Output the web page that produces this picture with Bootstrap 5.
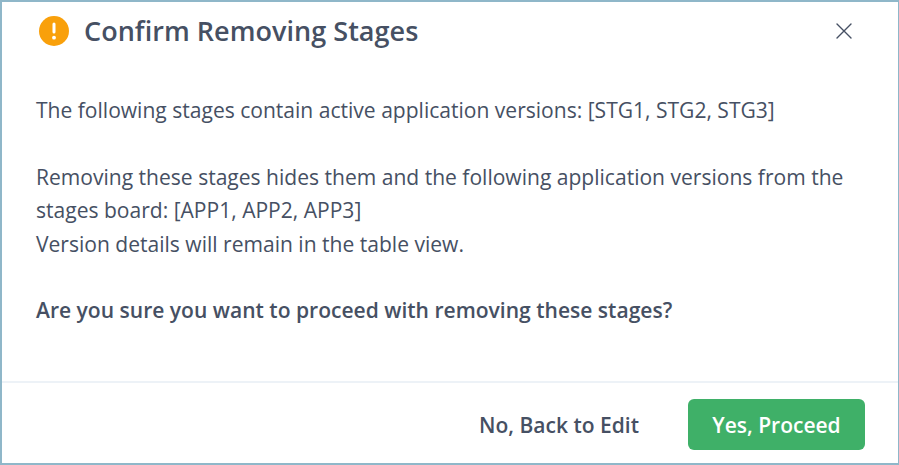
<!DOCTYPE html>
<html lang="en">
<head>
  <meta charset="UTF-8">
  <meta name="viewport" content="width=device-width, initial-scale=1">
  <title>Confirm Removing Stages</title>
  <link href="https://cdn.jsdelivr.net/npm/bootstrap@5.3.2/dist/css/bootstrap.min.css" rel="stylesheet">
  <style>
    html, body {
      height: 100%;
    }
    body {
      font-family: "Open Sans", "Liberation Sans", sans-serif;
      color: #465063;
      background: #fff;
    }
    .dialog-box {
      height: 465px;
      border: 1px solid #8fb7c9;
      border-width: 2px 1px 2px 2px;
    }
    .dialog-head {
      height: 58px;
      padding: 0 46px 0 37px;
    }
    .dialog-title {
      font-size: 27px;
      font-weight: 600;
      line-height: 36px;
      letter-spacing: .04px;
      margin: 0 0 0 15px;
      color: #465063;
    }
    .close-x {
      background: none;
      border: 0;
      padding: 0;
      line-height: 0;
    }
    .dialog-body {
      padding: 34px 34px 0;
      font-size: 21.05px;
      line-height: 33.4px;
    }
    .dialog-body p {
      margin: 0 0 33.4px;
    }
    .dialog-foot {
      height: 82px;
      border-top: 2px solid #edf2f7;
      padding: 2px 33px 0 0;
    }
    .btn-back {
      font-size: 21px;
      font-weight: 600;
      color: #465063;
      padding: 4px 0 0;
      border: 0;
      margin-right: 49px;
    }
    .btn-proceed {
      font-size: 21px;
      font-weight: 600;
      width: 177px;
      height: 51px;
      padding: 4px 0 0;
      border: 0;
      border-radius: 6px;
      background: #3fb068;
      color: #fff;
    }
  </style>
</head>
<body>
  <div class="dialog-box d-flex flex-column">
    <div class="dialog-head d-flex align-items-center">
      <svg width="30" height="30" viewBox="0 0 30 30">
        <circle cx="15" cy="15" r="15" fill="#f9a00b"/>
        <rect x="13.5" y="6.5" width="3" height="11" rx="1.5" fill="#fff"/>
        <circle cx="15" cy="21.7" r="1.9" fill="#fff"/>
      </svg>
      <h5 class="dialog-title flex-grow-1">Confirm Removing Stages</h5>
      <button class="close-x" type="button" aria-label="Close">
        <svg width="16" height="16" viewBox="0 0 16 16">
          <path d="M1 1L15 15M15 1L1 15" stroke="#465063" stroke-width="1.4" stroke-linecap="round"/>
        </svg>
      </button>
    </div>
    <div class="dialog-body flex-grow-1">
      <p>The following stages contain active application versions: [STG1, STG2, STG3]</p>
      <p>Removing these stages hides them and the following application versions from the stages board: [APP1, APP2, APP3]<br>Version details will remain in the table view.</p>
      <p class="fw-semibold">Are you sure you want to proceed with removing these stages?</p>
    </div>
    <div class="dialog-foot d-flex align-items-center justify-content-end">
      <button class="btn btn-back" type="button">No, Back to Edit</button>
      <button class="btn btn-proceed" type="button">Yes, Proceed</button>
    </div>
  </div>
  <script src="https://cdn.jsdelivr.net/npm/bootstrap@5.3.2/dist/js/bootstrap.bundle.min.js"></script>
</body>
</html>
